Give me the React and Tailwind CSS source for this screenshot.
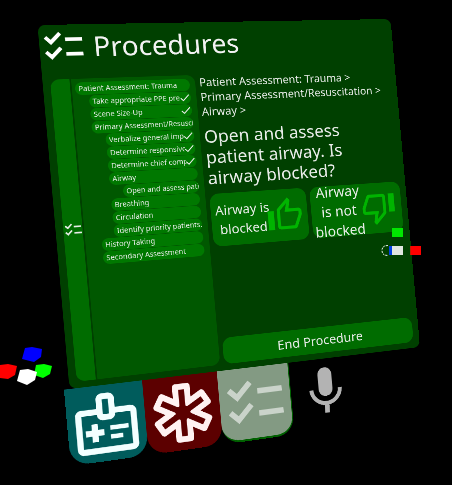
import React from "react";
import {
  MdCheck,
  MdChecklist,
  MdMic,
  MdOutlineEmergency,
  MdOutlineMedicalInformation,
  MdOutlineThumbDown,
  MdOutlineThumbUp,
} from "react-icons/md";

const STEPS = [
  { label: "Patient Assessment: Trauma", level: 0 },
  { label: "Take appropriate PPE pre", level: 1, done: true },
  { label: "Scene Size-Up", level: 1, done: true },
  { label: "Primary Assessment/Resusci", level: 1 },
  { label: "Verbalize general imp", level: 2, done: true },
  { label: "Determine responsive", level: 2, done: true },
  { label: "Determine chief comp", level: 2, done: true },
  { label: "Airway", level: 2 },
  { label: "Open and assess pati", level: 3 },
  { label: "Breathing", level: 2 },
  { label: "Circulation", level: 2 },
  { label: "Identify priority patients.", level: 2 },
  { label: "History Taking", level: 1 },
  { label: "Secondary Assessment", level: 1 },
];

const INDENT = ["ml-0", "ml-6", "ml-12", "ml-[72px]"];

function StepTree() {
  return (
    <nav aria-label="Procedure steps" className="flex w-[272px] shrink-0 gap-[3px]">
      <button
        type="button"
        aria-label="Toggle step list"
        className="flex w-[35px] shrink-0 items-center justify-center rounded-l-2xl bg-[#006c00]"
      >
        <MdChecklist className="size-9 shrink-0" />
      </button>
      <ul className="flex min-w-0 flex-1 flex-col gap-px rounded-r-2xl bg-[#005800] py-[7px] pr-[11px] pl-[6px]">
        {STEPS.map((step) => (
          <li key={step.label} className={INDENT[step.level]}>
            <button
              type="button"
              className="flex h-6 w-full items-center overflow-hidden rounded-full bg-[#007800] pl-[6px] text-left text-[14px] leading-6"
            >
              <span className="min-w-0 flex-1 overflow-hidden whitespace-nowrap">{step.label}</span>
              {step.done && <MdCheck className="-ml-1 size-6 shrink-0" />}
            </button>
          </li>
        ))}
      </ul>
    </nav>
  );
}

function CurrentStep() {
  return (
    <section className="flex min-w-0 flex-1 flex-col">
      <p className="pr-4 text-[22px] leading-[29px]">
        Patient Assessment: Trauma &gt; Primary Assessment/Resuscitation &gt; Airway &gt;
      </p>
      <h2 className="mt-[14px] pr-4 text-[35px] leading-[41px]">
        Open and assess patient airway. Is airway blocked?
      </h2>
      <div className="mt-3 grid grid-cols-2 gap-2">
        <button
          type="button"
          className="flex h-[104px] items-center rounded-[18px] bg-[#006c00] px-2 text-[26px] leading-[38px]"
        >
          <span className="w-[110px] shrink-0">Airway is blocked</span>
          <MdOutlineThumbUp className="-ml-2 size-[76px] shrink-0 text-[#00b400]" />
        </button>
        <button
          type="button"
          className="flex h-[104px] items-center rounded-[18px] bg-[#006c00] px-1 text-[29px] leading-[40px]"
        >
          <span className="w-[110px] shrink-0">Airway is not blocked</span>
          <MdOutlineThumbDown className="-ml-2 size-[76px] shrink-0 text-[#00b400]" />
        </button>
      </div>
      <button
        type="button"
        className="mt-auto h-[52px] w-full rounded-[18px] bg-[#006c00] text-[26px] leading-[36px]"
      >
        End Procedure
      </button>
    </section>
  );
}

function TabBar() {
  return (
    <div className="-ml-[10px] flex">
      <button
        type="button"
        aria-label="Patient information"
        className="flex size-36 items-center justify-center rounded-b-[36px] bg-[#005c5c] text-[#f2ffff]"
      >
        <MdOutlineMedicalInformation className="size-[136px]" />
      </button>
      <button
        type="button"
        aria-label="Emergency"
        className="flex size-36 items-center justify-center rounded-b-[36px] bg-[#5c0000] text-[#fff2f2]"
      >
        <MdOutlineEmergency className="size-[136px]" />
      </button>
      <button
        type="button"
        aria-label="Procedures"
        className="flex size-36 items-center justify-center rounded-b-[36px] border-r-2 border-b-4 border-[#006000] bg-[#839a83] text-[#cad3ca]"
      >
        <MdChecklist className="size-[132px] shrink-0" />
      </button>
      <button
        type="button"
        aria-label="Microphone"
        className="flex size-36 items-center justify-center pb-3 text-[#b3b3b3]"
      >
        <MdMic className="size-[116px] shrink-0" />
      </button>
    </div>
  );
}

function LeftHandle() {
  return (
    <svg aria-hidden="true" className="absolute top-[345px] left-0 h-10 w-14" viewBox="0 0 56 40">
      <path d="M25 3 32 2 42 4 41 12 34 17 22 14Z" fill="#0000ff" />
      <path d="M0 20 8 19 17 21 15 30 8 34 0 33Z" fill="#ff0000" />
      <path d="M36 20 44 19 52 21 50 29 43 33 34 30Z" fill="#00ff00" />
      <path d="M20 25 28 24 37 27 35 35 27 40 17 36Z" fill="#ffffff" />
    </svg>
  );
}

function RightHandle() {
  return (
    <svg aria-hidden="true" className="absolute top-[226px] left-[380px] h-8 w-11" viewBox="0 0 44 32">
      <path d="M12 2H23V11H12Z" fill="#00e600" />
      <path d="M12 20H23V29H12Z" fill="#dfe6df" />
      <path d="M9 20H12V29H9Z" fill="#0040e0" />
      <path d="M30 20H41V29H30Z" fill="#ff0000" />
      <path d="M30 20H31V29H30Z" fill="#c02000" />
      <path d="M8 19.500C4 19.500 2 21 2 24.500S4 29.500 8 29.500" fill="none" stroke="#e8f0e8" strokeDasharray="2 1" />
    </svg>
  );
}

export default function App() {
  return (
    <main className="relative h-screen w-full overflow-hidden bg-black font-['Noto_Sans','Open_Sans',sans-serif] text-[#e8ece8]">
      {/* The panel and its tabs share one tilted plane in the 3D scene. */}
      <div className="w-[704px] origin-top-left [transform:matrix3d(0.56216,-0.005568,0,0.00015553,0.046301,0.52789,0,-0.000003023,0,0,1,0,37.5,25,0,1)]">
        <div className="flex h-[688px] flex-col rounded-[14px] bg-[#004000] pr-[13px] pb-3 pl-[14px]">
          <header className="-ml-3 flex h-[84px] shrink-0 items-center gap-3 text-white">
            <MdChecklist className="size-[84px] shrink-0" />
            <h1 className="text-[53px] leading-[72px] text-[#f2f2f2]">Procedures</h1>
          </header>
          <div className="mt-5 flex min-h-0 flex-1 gap-2">
            <StepTree />
            <CurrentStep />
          </div>
        </div>
        <TabBar />
      </div>
      <LeftHandle />
      <RightHandle />
    </main>
  );
}
